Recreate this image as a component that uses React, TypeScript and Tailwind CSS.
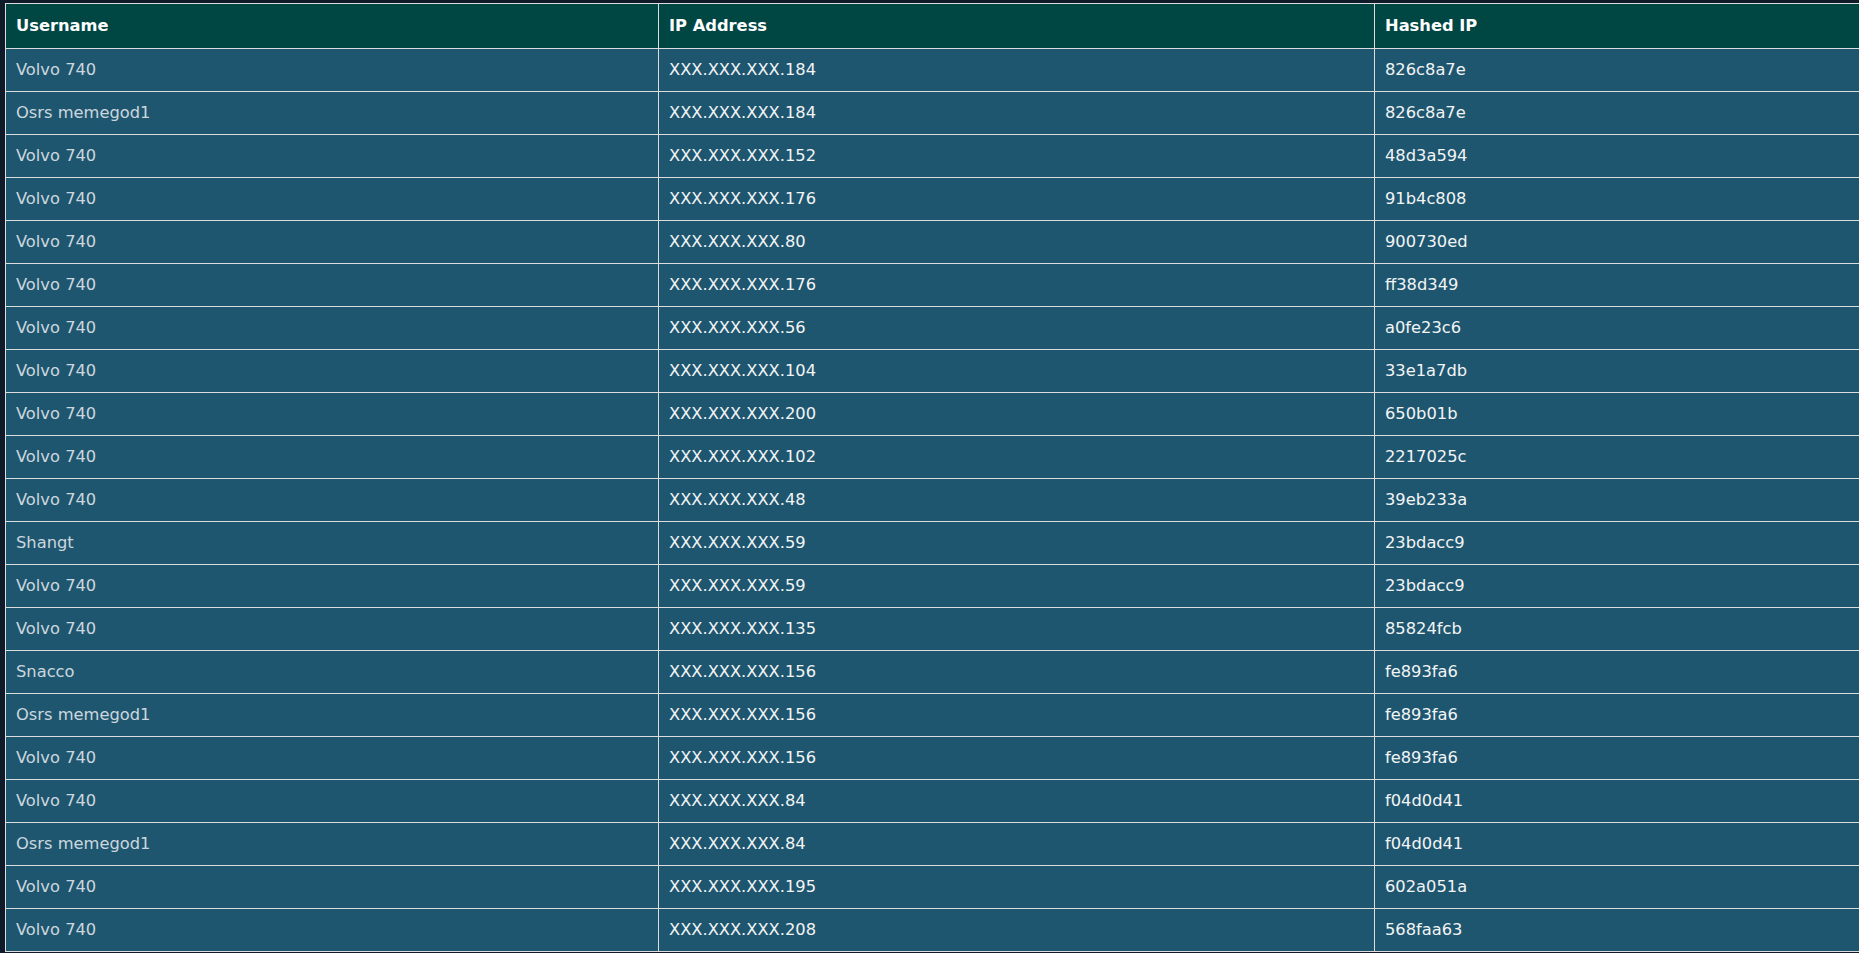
import React from "react";

const rows: [string, string, string][] = [
  ["Volvo 740", "XXX.XXX.XXX.184", "826c8a7e"],
  ["Osrs memegod1", "XXX.XXX.XXX.184", "826c8a7e"],
  ["Volvo 740", "XXX.XXX.XXX.152", "48d3a594"],
  ["Volvo 740", "XXX.XXX.XXX.176", "91b4c808"],
  ["Volvo 740", "XXX.XXX.XXX.80", "900730ed"],
  ["Volvo 740", "XXX.XXX.XXX.176", "ff38d349"],
  ["Volvo 740", "XXX.XXX.XXX.56", "a0fe23c6"],
  ["Volvo 740", "XXX.XXX.XXX.104", "33e1a7db"],
  ["Volvo 740", "XXX.XXX.XXX.200", "650b01b"],
  ["Volvo 740", "XXX.XXX.XXX.102", "2217025c"],
  ["Volvo 740", "XXX.XXX.XXX.48", "39eb233a"],
  ["Shangt", "XXX.XXX.XXX.59", "23bdacc9"],
  ["Volvo 740", "XXX.XXX.XXX.59", "23bdacc9"],
  ["Volvo 740", "XXX.XXX.XXX.135", "85824fcb"],
  ["Snacco", "XXX.XXX.XXX.156", "fe893fa6"],
  ["Osrs memegod1", "XXX.XXX.XXX.156", "fe893fa6"],
  ["Volvo 740", "XXX.XXX.XXX.156", "fe893fa6"],
  ["Volvo 740", "XXX.XXX.XXX.84", "f04d0d41"],
  ["Osrs memegod1", "XXX.XXX.XXX.84", "f04d0d41"],
  ["Volvo 740", "XXX.XXX.XXX.195", "602a051a"],
  ["Volvo 740", "XXX.XXX.XXX.208", "568faa63"],
];

export default function App() {
  return (
    <div
      className="h-[953px] w-[1859px] overflow-hidden bg-[#0f1b29] pt-[3px] pl-[5px]"
      style={{ fontFamily: '"DejaVu Sans", Verdana, sans-serif' }}
    >
      <table className="w-[1900px] table-fixed border-collapse border border-[#dddddd] text-[16.3px]">
        <colgroup>
          <col className="w-[653px]" />
          <col className="w-[716px]" />
          <col />
        </colgroup>
        <thead>
          <tr className="h-[45px] bg-[#004643]">
            <th className="border border-[#dddddd] px-[10px] text-left align-middle font-bold text-white">
              Username
            </th>
            <th className="border border-[#dddddd] px-[10px] text-left align-middle font-bold text-white">
              IP Address
            </th>
            <th className="border border-[#dddddd] px-[10px] text-left align-middle font-bold text-white">
              Hashed IP
            </th>
          </tr>
        </thead>
        <tbody>
          {rows.map((r, i) => (
            <tr key={i} className="h-[43px] bg-[#1f566f]">
              <td className="border border-[#dddddd] px-[10px] align-middle text-[#cbd6de]">
                {r[0]}
              </td>
              <td className="border border-[#dddddd] px-[10px] align-middle text-[#f2f4f5]">
                {r[1]}
              </td>
              <td className="border border-[#dddddd] px-[10px] align-middle text-[#f2f4f5]">
                {r[2]}
              </td>
            </tr>
          ))}
        </tbody>
      </table>
    </div>
  );
}
